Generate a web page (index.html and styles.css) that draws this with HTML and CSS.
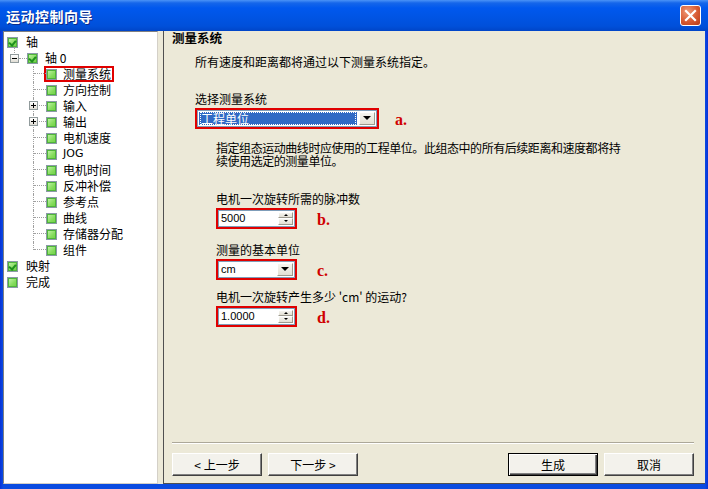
FILE: index.html
```html
<!DOCTYPE html>
<html lang="zh-CN">
<head>
  <meta charset="UTF-8">
  <title>运动控制向导</title>
  <link rel="stylesheet" href="styles.css">
</head>
<body>
  <div class="window">
    <div class="titlebar">
      <span class="title">运动控制向导</span>
      <span class="close">
        <svg width="13" height="13" viewBox="0 0 13 13"><path d="M2 2 L11 11 M11 2 L2 11" stroke="#fff" stroke-width="2.2" stroke-linecap="square"/></svg>
      </span>
    </div>

    <div class="client">
      <div class="tree">
        <div class="node top"><i class="cb on"></i><span class="lbl">轴</span></div>
        <div class="node axis">
          <span class="exp minus"></span><span class="dash"></span><i class="cb on"></i><span class="lbl">轴 0</span>
        </div>
        <div class="node child"><span class="branch"></span><span class="mark"><i class="cb"></i><span class="lbl">测量系统</span></span></div>
        <div class="node child"><span class="branch"></span><i class="cb"></i><span class="lbl">方向控制</span></div>
        <div class="node child"><span class="branch"><span class="exp plus"></span></span><i class="cb"></i><span class="lbl">输入</span></div>
        <div class="node child"><span class="branch"><span class="exp plus"></span></span><i class="cb"></i><span class="lbl">输出</span></div>
        <div class="node child"><span class="branch"></span><i class="cb"></i><span class="lbl">电机速度</span></div>
        <div class="node child"><span class="branch"></span><i class="cb"></i><span class="lbl latin">JOG</span></div>
        <div class="node child"><span class="branch"></span><i class="cb"></i><span class="lbl">电机时间</span></div>
        <div class="node child"><span class="branch"></span><i class="cb"></i><span class="lbl">反冲补偿</span></div>
        <div class="node child"><span class="branch"></span><i class="cb"></i><span class="lbl">参考点</span></div>
        <div class="node child"><span class="branch"></span><i class="cb"></i><span class="lbl">曲线</span></div>
        <div class="node child"><span class="branch"></span><i class="cb"></i><span class="lbl">存储器分配</span></div>
        <div class="node child last"><span class="branch"></span><i class="cb"></i><span class="lbl">组件</span></div>
        <div class="node top"><i class="cb on"></i><span class="lbl">映射</span></div>
        <div class="node top"><i class="cb"></i><span class="lbl">完成</span></div>
      </div>

      <div class="page">
        <div class="heading">测量系统</div>
        <p class="intro">所有速度和距离都将通过以下测量系统指定。</p>

        <div class="label lvl1 gap-a">选择测量系统</div>
        <div class="field lvl1">
          <span class="redbox wide">
            <span class="combo">
              <span class="sel"><span class="focus">工程单位</span></span>
              <span class="arrow"><i class="tri"></i></span>
            </span>
          </span>
          <span class="tag tag-a">a.</span>
        </div>

        <p class="desc">指定组态运动曲线时应使用的工程单位。此组态中的所有后续距离和速度都将持<br>续使用选定的测量单位。</p>

        <div class="label lvl2 gap-b">电机一次旋转所需的脉冲数</div>
        <div class="field lvl2 gap-s">
          <span class="redbox">
            <span class="spin">
              <span class="val">5000</span>
              <span class="spinbtns"><i class="up"></i><i class="down"></i></span>
            </span>
          </span>
          <span class="tag">b.</span>
        </div>

        <div class="label lvl2 gap-c">测量的基本单位</div>
        <div class="field lvl2 gap-s">
          <span class="redbox">
            <span class="combo white">
              <span class="val">cm</span>
              <span class="arrow"><i class="tri"></i></span>
            </span>
          </span>
          <span class="tag">c.</span>
        </div>

        <div class="label lvl2 gap-d">电机一次旋转产生多少 'cm' 的运动?</div>
        <div class="field lvl2 gap-s">
          <span class="redbox">
            <span class="spin">
              <span class="val">1.0000</span>
              <span class="spinbtns"><i class="up"></i><i class="down"></i></span>
            </span>
          </span>
          <span class="tag">d.</span>
        </div>

        <div class="footer">
          <div class="buttons">
            <span class="btn">&lt; 上一步</span>
            <span class="btn">下一步 &gt;</span>
            <span class="spacer"></span>
            <span class="btn default">生成</span>
            <span class="btn">取消</span>
          </div>
        </div>
      </div>
    </div>
  </div>
</body>
</html>
```
FILE: styles.css
```css
* {
  box-sizing: border-box;
}

body {
  margin: 0;
  background: #fff;
  font-family: "Noto Sans CJK SC", "Noto Sans", sans-serif;
  font-size: 12px;
  color: #000;
}

.window {
  width: 708px;
  height: 489px;
  display: flex;
  flex-direction: column;
  background: linear-gradient(90deg, #0831d9, #0a4be0 3px, #0a4be0 705px, #0831d9);
}

/* title bar */
.titlebar {
  height: 31px;
  display: flex;
  align-items: center;
  padding: 0 6px 0 6px;
  background: linear-gradient(#4a93f7 0, #1566ea 3px, #0058ee 8px, #0054e3 18px, #0050da 26px, #0045c8 31px);
}

.title {
  flex: 1;
  color: #fff;
  font-weight: bold;
  font-size: 14px;
  letter-spacing: 0.5px;
  text-shadow: 1px 1px #0b2a8a;
}

.close {
  width: 21px;
  height: 21px;
  margin-right: 1px;
  border: 1px solid #fff;
  border-radius: 3px;
  background: radial-gradient(circle at 35% 30%, #f09a78, #d75a32 55%, #b83a15);
  display: flex;
  align-items: center;
  justify-content: center;
}

/* client area */
.client {
  flex: 1;
  display: flex;
  margin: 0 3px 5px 3px;
  background: #ece9d8;
}

.tree {
  width: 155px;
  background: #fff;
  border: 1px solid;
  border-color: #808080 #d4d0c8 #d4d0c8 #808080;
  padding: 2px 0 0 0;
}

.node {
  height: 16px;
  display: flex;
  align-items: center;
  position: relative;
  white-space: nowrap;
}

.node.top {
  padding-left: 3px;
}

.node.top .lbl {
  margin-left: 8px;
}

.node.axis {
  padding-left: 6px;
}

.node.axis .lbl {
  margin-left: 7px;
}

.node.child {
  padding-left: 29px;
}

.node.child .lbl {
  margin-left: 6px;
}

.lbl {
  line-height: 16px;
}

.lbl.latin {
  font-family: "DejaVu Sans", sans-serif;
  font-size: 11px;
}

/* tree state boxes */
.cb {
  width: 11px;
  height: 11px;
  flex: none;
  border: 1px solid #8b9aa6;
  background: linear-gradient(135deg, #c9f5b1, #84dc5c 60%, #6fcf45);
  box-shadow: inset 0 0 0 1px #4fb53a;
  position: relative;
}

.cb.on::after {
  content: "";
  position: absolute;
  left: 2px;
  top: 1px;
  width: 3px;
  height: 5px;
  border: solid #1e8f1e;
  border-width: 0 2px 2px 0;
  transform: rotate(40deg);
}

.branch {
  width: 13px;
  height: 16px;
  flex: none;
  position: relative;
  border-left: 1px dotted #a0a0a0;
}

.node.last .branch {
  height: 8px;
  align-self: flex-start;
}

.branch::after {
  content: "";
  position: absolute;
  left: 0;
  top: 7px;
  width: 12px;
  border-top: 1px dotted #a0a0a0;
}

.dash {
  width: 8px;
  border-top: 1px dotted #a0a0a0;
}

.exp {
  width: 9px;
  height: 9px;
  flex: none;
  border: 1px solid #919b9c;
  background: linear-gradient(#fff, #e0ddd4);
  position: relative;
  z-index: 1;
}

.exp::before {
  content: "";
  position: absolute;
  left: 1px;
  top: 3px;
  width: 5px;
  border-top: 1px solid #000;
}

.exp.plus {
  position: absolute;
  left: -5px;
  top: 3px;
}

.exp.plus::after {
  content: "";
  position: absolute;
  left: 3px;
  top: 1px;
  height: 5px;
  border-left: 1px solid #000;
}

.exp.minus::after {
  content: "";
  position: absolute;
  left: 3px;
  top: -8px;
  height: 6px;
  border-left: 1px dotted #a0a0a0;
}

.mark {
  display: flex;
  align-items: center;
  margin-left: -2px;
  height: 16px;
  padding-right: 1px;
  border: 2px solid #e00000;
}

.node.child .mark .lbl {
  margin-left: 6px;
  line-height: 12px;
}

/* wizard page */
.page {
  flex: 1;
  margin-left: 5px;
  border-left: 1px solid #505050;
  border-bottom: 1px solid #505050;
  display: flex;
  flex-direction: column;
  padding: 0 11px 7px 8px;
}

.heading {
  font-weight: bold;
  font-size: 12.5px;
  line-height: 14px;
}

p {
  margin: 0;
}

.intro {
  margin: 10px 0 0 23px;
  line-height: 14px;
}

.label {
  line-height: 14px;
}

.lvl1 {
  margin-left: 23px;
}

.lvl2 {
  margin-left: 44px;
}

.gap-a {
  margin-top: 23px;
}

.gap-b {
  margin-top: 25px;
}

.gap-c {
  margin-top: 14px;
}

.gap-d {
  margin-top: 10px;
}

.gap-s {
  margin-top: 3px;
}

.desc {
  margin: 12px 0 0 44px;
  line-height: 13px;
  letter-spacing: -0.45px;
}

.field {
  display: flex;
  align-items: center;
  margin-top: 1px;
}

.redbox {
  width: 81px;
  height: 21px;
  border: 2px solid #e00000;
  display: flex;
}

.redbox.wide {
  width: 184px;
}

.tag {
  margin-left: 20px;
  padding-top: 4px;
  font-family: "Liberation Serif", serif;
  font-weight: bold;
  font-size: 16px;
  color: #d00000;
}

.tag-a {
  margin-left: 16px;
}

.combo,
.spin {
  flex: 1;
  display: flex;
  background: #fff;
  border: 1px solid #7f9db9;
  padding: 1px;
}

.sel {
  flex: 1;
  background: #316ac5;
  color: #fff;
  display: flex;
  padding: 0 1px;
}

.focus {
  flex: 1;
  outline: 1px dotted #fff;
  outline-offset: -1px;
  line-height: 13px;
  padding-left: 1px;
}

.val {
  flex: 1;
  font-family: "Liberation Sans", sans-serif;
  font-size: 11px;
  line-height: 13px;
  padding-left: 1px;
}

.arrow {
  width: 16px;
  margin-left: 2px;
  background: linear-gradient(#f6f5f0, #e3e0d4);
  border: 1px solid;
  border-color: #fff #9d9a8f #9d9a8f #fff;
  display: flex;
  align-items: center;
  justify-content: center;
}

.tri {
  width: 0;
  height: 0;
  border-left: 4px solid transparent;
  border-right: 4px solid transparent;
  border-top: 4px solid #000;
}

.spinbtns {
  width: 15px;
  display: flex;
  flex-direction: column;
}

.spinbtns i {
  flex: 1;
  background: linear-gradient(#f6f5f0, #e3e0d4);
  border: 1px solid;
  border-color: #fff #9d9a8f #9d9a8f #fff;
  display: flex;
  align-items: center;
  justify-content: center;
}

.spinbtns i::after {
  content: "";
  border-left: 2px solid transparent;
  border-right: 2px solid transparent;
}

.spinbtns .up::after {
  border-bottom: 2px solid #000;
}

.spinbtns .down::after {
  border-top: 2px solid #000;
}

/* footer */
.footer {
  margin-top: auto;
  border-top: 1px solid #aca899;
  box-shadow: inset 0 1px #fff;
  padding-top: 10px;
}

.buttons {
  display: flex;
  gap: 6px;
}

.spacer {
  flex: 1;
}

.btn {
  width: 90px;
  height: 23px;
  display: flex;
  align-items: center;
  justify-content: center;
  background: #f3f2ec;
  border: 1px solid;
  border-color: #fff #404040 #404040 #fff;
  box-shadow: inset -1px -1px #808080;
}

.btn.default {
  border: 1px solid #000;
  box-shadow: inset 1px 1px #fff, inset -1px -1px #404040, inset -2px -2px #808080;
}
```
